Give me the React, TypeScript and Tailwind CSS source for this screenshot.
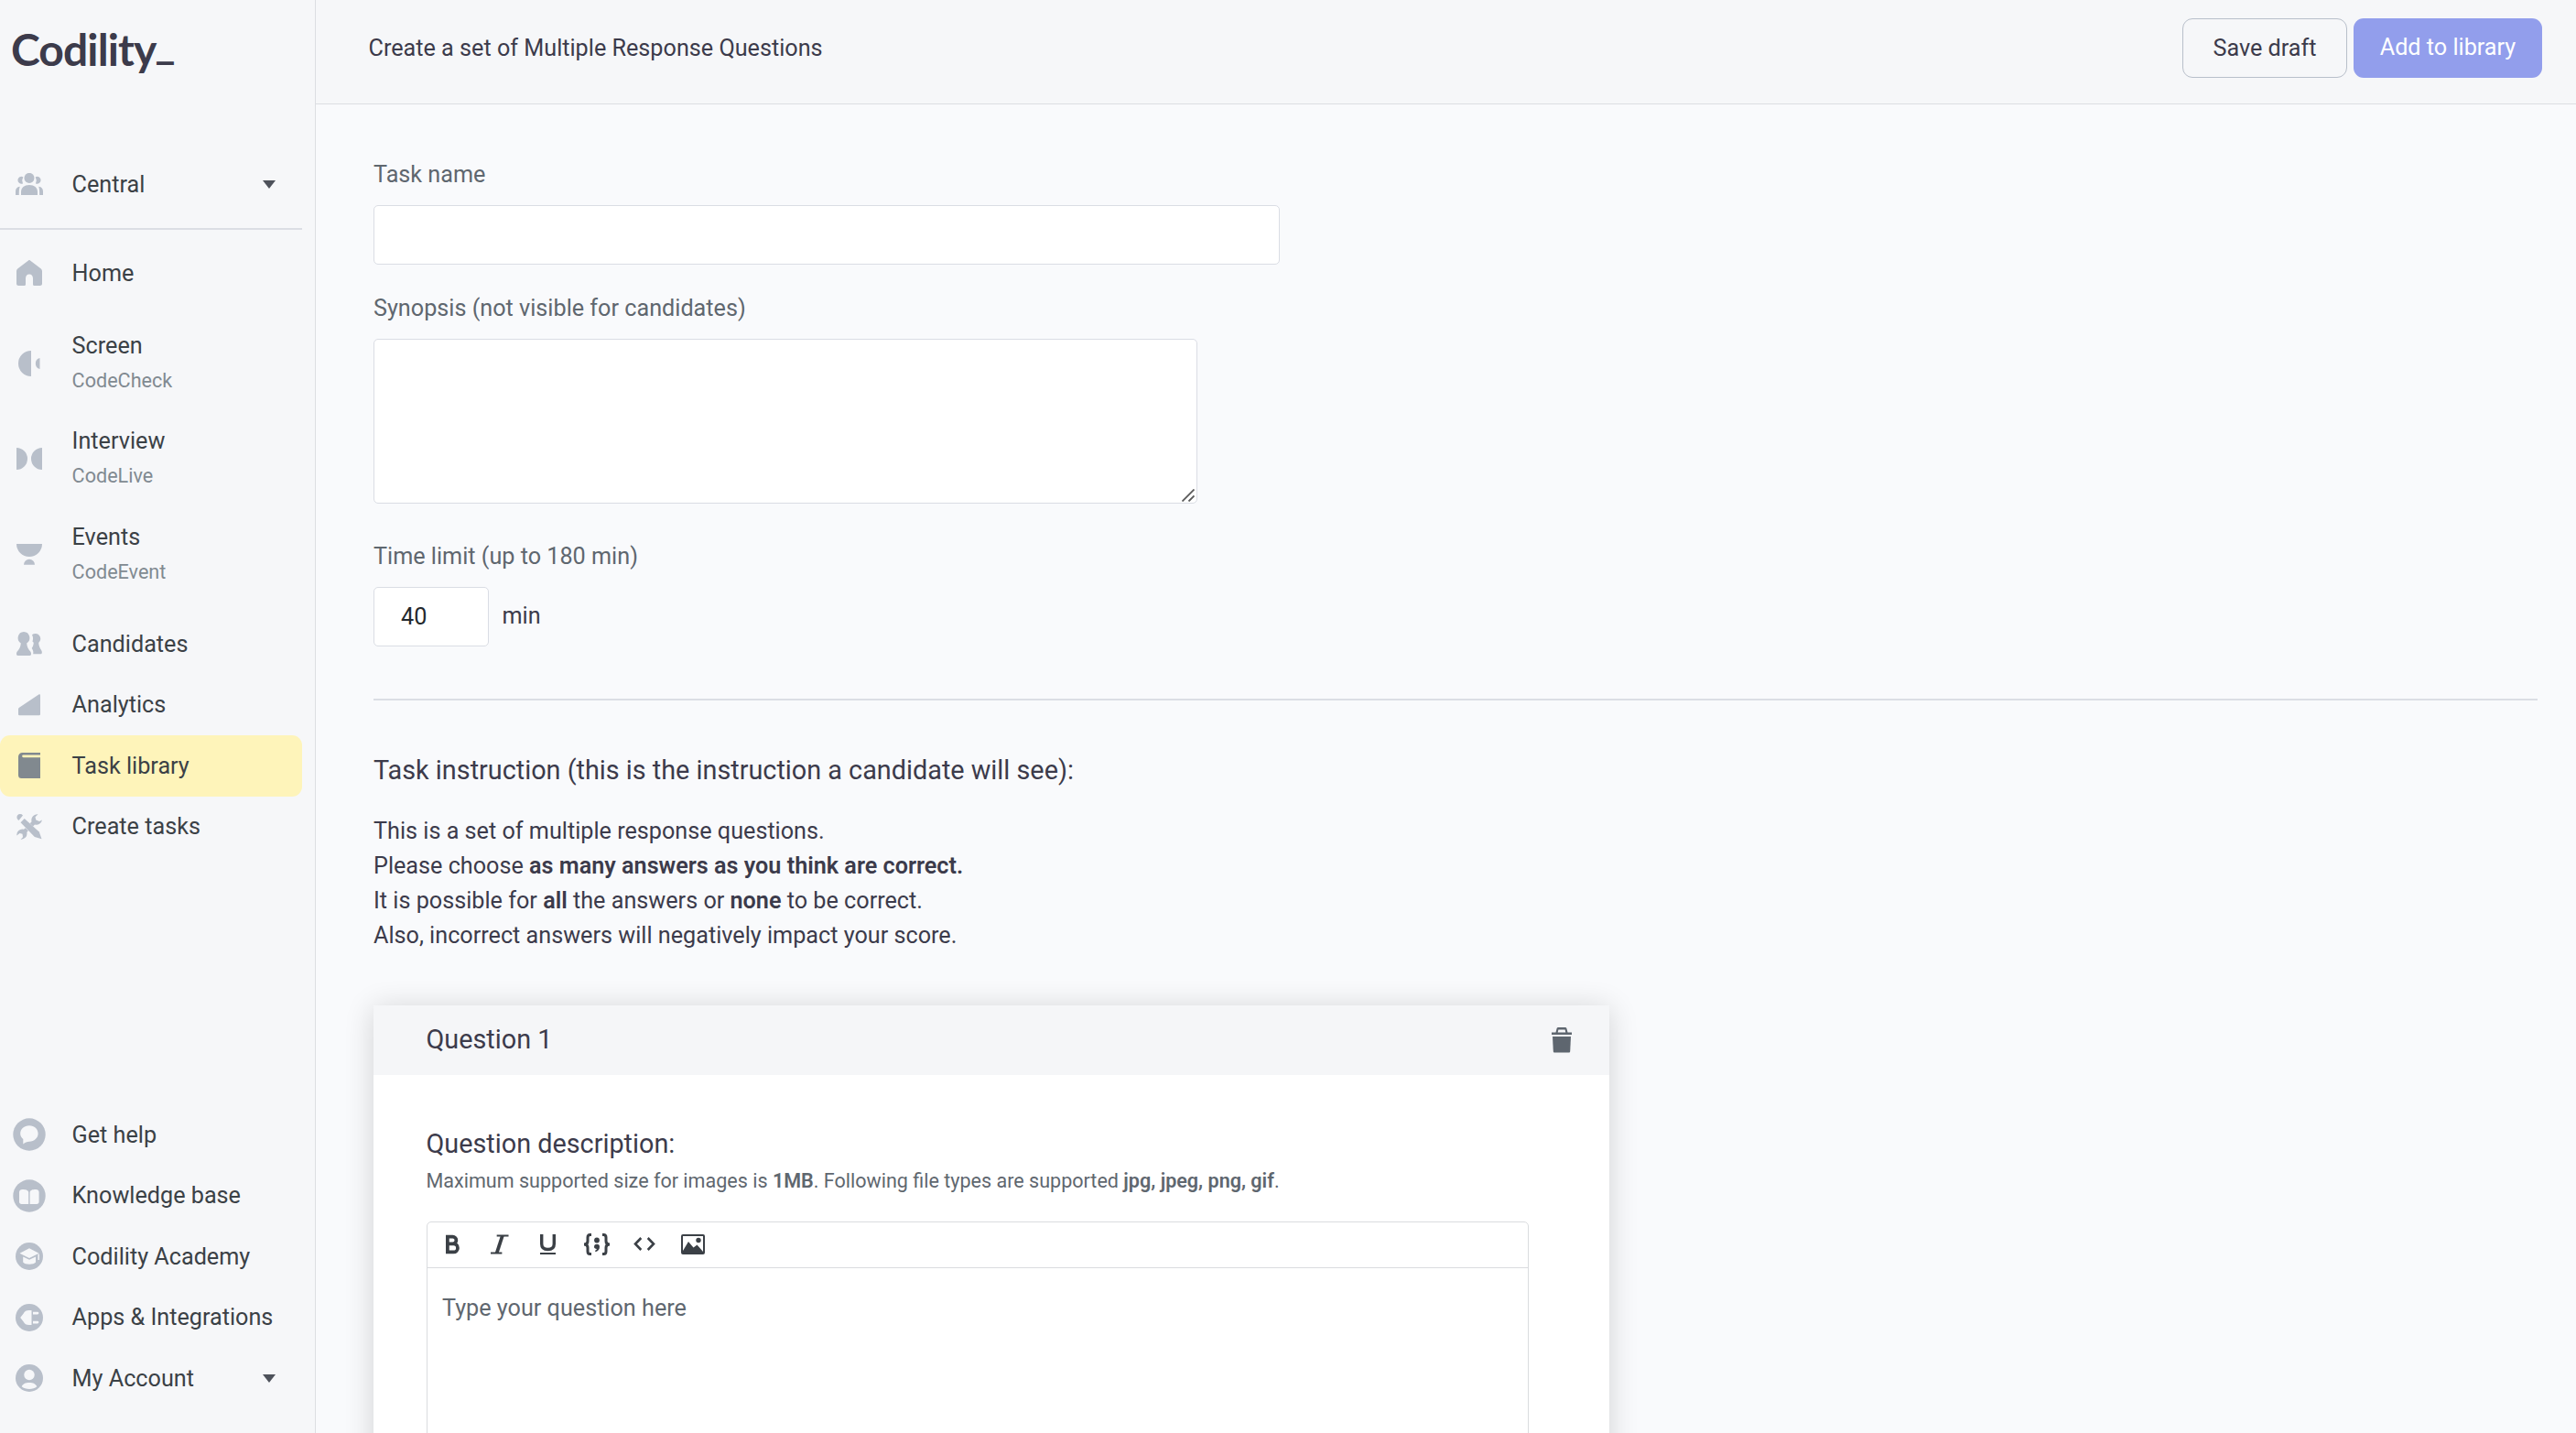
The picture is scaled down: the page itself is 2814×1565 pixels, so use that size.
import React from "react";
import clsx from "clsx";

const icons = {
  group: (
    <svg width="30" height="24" viewBox="0 0 30 24" fill="currentColor">
      <circle cx="15" cy="5.4" r="5.5" />
      <path d="M6 24v-3.500c0-4.500 3.500-7.500 9-7.500s9 3 9 7.500v3.500z" />
      <path d="M8.300 4.200a4 4 0 1 0-.3 7.200A8 8 0 0 1 8.300 4.200z" />
      <path d="M21.700 4.200a4 4 0 1 1 .3 7.200A8 8 0 0 0 21.700 4.200z" />
      <path d="M0 24v-4c0-2.800 1.500-4.800 4.800-5.200C4 17 3.800 19 3.800 24z" />
      <path d="M30 24v-4c0-2.800-1.500-4.800-4.800-5.200.8 2.200 1 4.200 1 9.200z" />
    </svg>
  ),
  home: (
    <svg width="28" height="28" viewBox="0 0 28 28" fill="currentColor">
      <path d="M13 .4a1.500 1.500 0 0 1 2 0L26.800 9.500c.8.700 1.200 1.500 1.200 2.500v13.500a2.300 2.300 0 0 1-2.300 2.500H19.500a1.500 1.500 0 0 1-1.500-1.500V20c0-2.600-1.500-4.500-4-4.500S10 17.400 10 20v6.500A1.500 1.500 0 0 1 8.500 28H2.300A2.300 2.300 0 0 1 0 25.500V12c0-1 .4-1.800 1.200-2.500z" />
    </svg>
  ),
  screen: (
    <svg width="24" height="28" viewBox="0 0 24 28" fill="currentColor">
      <path d="M14 0v28A14 14 0 0 1 14 0zM23.500 8v12a6.200 6.200 0 0 1 0-12z" />
    </svg>
  ),
  interview: (
    <svg width="28" height="24" viewBox="0 0 28 24" fill="currentColor">
      <path d="M0 0v24a12 12 0 0 0 0-24zM28 0v24a12 12 0 0 1 0-24z" />
    </svg>
  ),
  events: (
    <svg width="28" height="23" viewBox="0 0 28 23" fill="currentColor">
      <path d="M0 0h28a14 14 0 0 1-28 0zM8 22.700a6 6 0 0 1 12 0z" />
    </svg>
  ),
  candidates: (
    <svg width="28" height="26" viewBox="0 0 28 26" fill="currentColor">
      <path d="M8 0a6.700 6.700 0 0 0-3.200 12.400C4.600 16.500 2.800 19 .8 21.500 0 22.500 0 23.500 0 24.300 0 25.300.6 26 1.500 26h13c1 0 1.500-.7 1.500-1.700 0-.8 0-1.800-.8-2.800-2-2.500-3.800-5-4-9.100A6.700 6.700 0 0 0 8 0z" />
      <path d="M17 3.300A5.200 5.200 0 1 1 24.200 12c.2 3.500 1.500 6 3 8.200 1 1.500.9 4.100-.7 4.100h-8.300c.5-2.800-.2-4.500-1.500-6.300 1.300-2 2-4 2.100-6.200a6 6 0 0 1-1.300-1.300c.8-2.400.8-4.800-.5-7.200z" />
    </svg>
  ),
  analytics: (
    <svg width="24" height="24" viewBox="0 0 24 24" fill="currentColor">
      <path d="M22.300.5c.9-.6 1.700-.1 1.700.9v20.600a1.300 1.300 0 0 1-1.300 1.300H1.300A1.300 1.300 0 0 1 0 22v-5.500c0-.8.3-1.300 1-1.800z" />
    </svg>
  ),
  library: (
    <svg width="24" height="28" viewBox="0 0 24 28" fill="currentColor">
      <path d="M4.500 0H24v2.500H5.500a1.300 1.300 0 0 0 0 2.700H24V28H3.500A3.500 3.500 0 0 1 0 24.500v-20A4.500 4.500 0 0 1 4.500 0z" />
    </svg>
  ),
  tools: (
    <svg width="28" height="28" viewBox="0 0 28 28" fill="currentColor">
      <path d="M1 1.500A3.800 3.800 0 0 1 7 1.500L2.500 7A4 4 0 0 1 1 1.500z" />
      <path d="M8.700 5 24.800 19.500 27.500 27.300 19.800 25 4.500 9.200z" />
      <path d="M23.500.3A6.300 6.300 0 0 0 16.600 8.300L14.800 10.200 18 13.400 20 11.500A6.300 6.300 0 0 0 28 6.500L25 8 21.300 6.500 20.500 3.300z" />
      <path d="M9.800 15.300 12.800 18.300 11.300 20A6.300 6.300 0 0 1 4.500 27.700L7 25.200 6.500 21.700 3.500 21 .3 23.500A6.300 6.300 0 0 1 8 16.700z" />
    </svg>
  ),
  help: (
    <svg width="36" height="36" viewBox="0 0 36 36" fill="none">
      <circle cx="18" cy="18" r="17.7" fill="currentColor" />
      <path
        d="M18 8.300c5.600 0 9.600 3.900 9.600 8.700 0 4.900-4.200 8.500-9.600 8.700-2.600.1-4.500 1-6.700 2.700V23C9.300 21.500 8.200 19.300 8.200 17c0-4.800 4.200-8.700 9.800-8.700z"
        fill="#f6f7f9"
      />
    </svg>
  ),
  book: (
    <svg width="36" height="36" viewBox="0 0 36 36" fill="none">
      <circle cx="18" cy="18" r="17.700" fill="currentColor" />
      <path
        d="M7 14c0-2 1.500-3 3.500-3 3.500 0 6.700.7 6.700 3.500V27H9.500C8 27 7 26 7 24.500zM28.600 14c0-2-1.500-3-3.500-3-3.500 0-6.500.7-6.500 3.500V27h7.500c1.500 0 2.500-1 2.500-2.500z"
        fill="#f6f7f9"
      />
    </svg>
  ),
  academy: (
    <svg width="30" height="30" viewBox="0 0 30 30" fill="none">
      <circle cx="15" cy="15" r="15" fill="currentColor" />
      <path
        d="M4.500 11.800 15 6.200 25.500 11.800 15 17zM8.200 15.500 15 18.800 22 15.500V21.500C19.500 24.500 10.500 24.500 8.200 21.500z"
        fill="#f6f7f9"
      />
      <path d="M25.200 12.500V19" stroke="#f6f7f9" strokeWidth="1.400" />
    </svg>
  ),
  apps: (
    <svg width="30" height="30" viewBox="0 0 30 30" fill="none">
      <circle cx="15" cy="15" r="15" fill="currentColor" />
      <path
        d="M17.500 7v16h-3c-2.800 0-4.500-1-6-3.800L5.200 15 8.500 10.800C10 8 11.700 7 14.500 7zM19 8.700h5a1 1 0 0 1 0 2.700h-5zM19 18.700h5a1 1 0 0 1 0 2.700h-5z"
        fill="#f6f7f9"
      />
    </svg>
  ),
  account: (
    <svg width="30" height="30" viewBox="0 0 30 30" fill="none">
      <circle cx="15" cy="15" r="15" fill="currentColor" />
      <circle cx="15" cy="11.500" r="5.700" fill="#f6f7f9" />
      <path d="M6.700 24.300c1-2.800 4.300-4.300 8.300-4.300s7.300 1.500 8.300 4.300c-4 3.700-12.600 3.700-16.600 0z" fill="#f6f7f9" />
    </svg>
  ),
};

type NavItemProps = {
  icon: keyof typeof icons;
  label: string;
  sub?: string;
  active?: boolean;
  caret?: boolean;
};

const NavItem = ({ icon, label, sub, active, caret }: NavItemProps) => {
  return (
    <a
      className={clsx(
        "flex w-[330px] items-center rounded-[11px] pl-[14px] pr-[29px]",
        sub ? "h-[104.7px]" : "h-[66.5px]",
        active && "bg-[#fef4ba]"
      )}
    >
      <span
        className={clsx(
          "flex w-9 shrink-0 justify-center",
          active ? "text-[#81898f]" : "text-[#b8bfca]"
        )}
      >
        {icons[icon]}
      </span>
      <span className={clsx("ml-[28.6px] flex flex-1 flex-col", !sub && "pt-px")}>
        <span className="leading-[38px]">{label}</span>
        {sub && (
          <span className="text-[21.6px] leading-[38px] text-[#818a91]">
            {sub}
          </span>
        )}
      </span>
      {caret && (
        <svg width="14" height="9" viewBox="0 0 14 9" fill="#4e525b">
          <path d="M0 0h14L7 9z" />
        </svg>
      )}
    </a>
  );
};

const Sidebar = () => {
  return (
    <aside className="flex h-full w-[345px] shrink-0 flex-col border-r border-[#dcdee2] bg-[#f6f7f9] text-[#3b4146]">
      <div className="h-[168px] pl-3 pt-[26px] font-['Lato',sans-serif] text-[48px] font-bold leading-[56px] tracking-[-0.9px] text-[#3c3b4b]">
        Codility<span className="relative -left-px -top-[8px]">_</span>
      </div>
      <NavItem icon="group" label="Central" caret />
      <div className="mb-[14.500px] mt-[14px] h-0.5 w-[330px] bg-[#dbdee4]" />
      <NavItem icon="home" label="Home" />
      <div className="mt-[12.700px]">
        <NavItem icon="screen" label="Screen" sub="CodeCheck" />
        <NavItem icon="interview" label="Interview" sub="CodeLive" />
        <NavItem icon="events" label="Events" sub="CodeEvent" />
      </div>
      <div className="mt-[11.900px]">
        <NavItem icon="candidates" label="Candidates" />
        <NavItem icon="analytics" label="Analytics" />
        <NavItem icon="library" label="Task library" active />
        <NavItem icon="tools" label="Create tasks" />
      </div>
      <div className="mb-[26.400px] mt-auto">
        <NavItem icon="help" label="Get help" />
        <NavItem icon="book" label="Knowledge base" />
        <NavItem icon="academy" label="Codility Academy" />
        <NavItem icon="apps" label="Apps & Integrations" />
        <NavItem icon="account" label="My Account" caret />
      </div>
    </aside>
  );
};

const Header = () => {
  return (
    <header className="flex h-[114px] shrink-0 justify-between border-b border-[#dcdee2] bg-[#f6f7f9] pl-[57.500px] pr-[37px] pt-5">
      <h1 className="leading-[65px]">
        Create a set of Multiple Response Questions
      </h1>
      <div className="flex gap-[7px]">
        <button className="h-[65px] w-[180px] rounded-[11px] border border-[#b8bfca]">
          Save draft
        </button>
        <button className="h-[65px] w-[206px] rounded-[11px] bg-[#929eec] pb-0.5 text-white">
          Add to library
        </button>
      </div>
    </header>
  );
};

const EditorToolbar = () => {
  return (
    <div className="flex h-[50px] items-center border-b border-[#dadcdf] pb-0.5 pl-5 text-[#3b4046]">
      <svg width="15" height="22" viewBox="0 0 16 22" fill="none" stroke="currentColor" strokeWidth="4">
        <path d="M2 2H8a4 4 0 0 1 0 8.300H2M2 10.300H9a4.700 4.700 0 0 1 0 9.700H2zM2 0V22" />
      </svg>
      <svg className="ml-[34px]" width="20" height="22" viewBox="0 0 21 22" fill="none" stroke="currentColor">
        <path d="M7 1H20.500M0 21H13" strokeWidth="2" />
        <path d="M13.500 1 7 21" strokeWidth="4" />
      </svg>
      <svg className="ml-[34px]" width="17" height="22" viewBox="0 0 17 22" fill="none" stroke="currentColor">
        <path d="M1.700 0V10.500C1.700 14.500 4.200 16.500 8.500 16.500S15.300 14.500 15.300 10.500V0" strokeWidth="3.400" />
        <path d="M0 21H17" strokeWidth="2" />
      </svg>
      <svg className="ml-[30px]" width="30" height="24" viewBox="0 0 30 24" fill="none" stroke="currentColor" strokeWidth="3">
        <path d="M9 1.500H7.500C5.500 1.500 5 2.700 5 4.500V8.500C5 10.700 3.500 12 1 12 3.500 12 5 13.300 5 15.500V19.500C5 21.300 5.500 22.500 7.500 22.500H9M21 1.500H22.500C24.500 1.500 25 2.700 25 4.500V8.500C25 10.700 26.500 12 29 12 26.500 12 25 13.300 25 15.500V19.500C25 21.300 24.500 22.500 22.500 22.500H21" />
        <circle cx="15" cy="7.500" r="2.900" fill="currentColor" stroke="none" />
        <path d="M12 14.800a3 3 0 0 1 6 0c0 3-1.700 4.700-4.700 5.400v-1.800c1-.4 1.500-.8 1.600-1.500-1.700 0-2.900-.8-2.900-2.100z" fill="currentColor" stroke="none" />
      </svg>
      <svg className="ml-[25px]" width="24" height="15" viewBox="0 0 24 15" fill="none" stroke="currentColor" strokeWidth="2.600">
        <path d="M8.300 1 2 7.500 8.300 14M15.700 1 22 7.500 15.700 14" />
      </svg>
      <svg className="ml-[27.500px]" width="26" height="22" viewBox="0 0 26 22" fill="none" stroke="currentColor" strokeWidth="2">
        <rect x="1" y="1" width="24" height="20" rx="1" />
        <path d="M2 20V18L8 8 13.500 14.500 17.500 11.500 24 19V20z" fill="currentColor" stroke="none" />
        <circle cx="19" cy="6.500" r="2.700" fill="currentColor" stroke="none" />
      </svg>
    </div>
  );
};

const QuestionCard = () => {
  return (
    <section className="mt-[57px] flex h-[700px] w-[1350px] shrink-0 flex-col bg-white shadow-[0_3px_30px_rgba(0,0,0,0.16)]">
      <div className="flex h-[76px] shrink-0 items-center justify-between bg-[#f5f6f8] pl-[57.500px] pr-[41px]">
        <h3 className="pb-0.5 text-[28.8px] leading-[74px]">Question 1</h3>
        <svg width="22" height="28" viewBox="0 0 22 28" fill="#5e666f">
          <path d="M0 5.500h4.500L5.500 1.500C5.800.5 6.300 0 7.300 0h7.400c1 0 1.500.5 1.800 1.500l1 4H22V8H0zM6.700 5.500h8.600l-.7-3H7.400z" fillRule="evenodd" />
          <path d="M1 10h20l-.8 16.200c-.1.900-.6 1.300-1.400 1.300H3.200c-.8 0-1.300-.4-1.400-1.300z" />
        </svg>
      </div>
      <div className="flex flex-1 flex-col pl-[57.500px] pr-[88px] pt-[55px]">
        <h4 className="text-[28.8px] leading-10">Question description:</h4>
        <p className="pt-px text-[21.56px] leading-10 text-[#5f676f]">
          Maximum supported size for images is <b className="font-semibold">1MB</b>. Following
          file types are supported <b className="font-semibold">jpg, jpeg, png, gif</b>.
        </p>
        <div className="ml-[0.5px] mt-[24px] flex-1 rounded-t-[5px] border border-[#dadcdf]">
          <EditorToolbar />
          <div className="px-4 pt-[25px] leading-[38px] text-[#5f676f]">
            Type your question here
          </div>
        </div>
      </div>
    </section>
  );
};

const TaskForm = () => {
  return (
    <main className="flex flex-1 flex-col overflow-hidden bg-[#f9fafc] pl-[63px] pr-[42px] pt-[58px]">
      <label className="leading-[38px] text-[#5f676f]">Task name</label>
      <input className="mt-[14px] h-[65px] w-[990px] shrink-0 rounded-[5px] border border-[#dadde4] bg-white" />
      <label className="mt-[29px] leading-[38px] text-[#5f676f]">
        Synopsis (not visible for candidates)
      </label>
      <div className="relative mt-[14px] h-[180px] w-[900px] shrink-0">
        <textarea className="block h-full w-full resize-none rounded-[5px] border border-[#dadde4] bg-white" />
        <svg className="absolute bottom-0.5 right-[3px]" width="14" height="14" viewBox="0 0 14 14" stroke="#5a5a5a" strokeWidth="1.800">
          <path d="M0.500 13.500 13.500 .5M7.500 13.500 13.500 7.500" />
        </svg>
      </div>
      <label className="mt-[39px] leading-[38px] text-[#5f676f]">
        Time limit (up to 180 min)
      </label>
      <div className="mt-[14px] flex items-center">
        <input
          className="h-[65px] w-[126px] rounded-[5px] border border-[#dadde4] bg-white pl-[29px] text-[#23282d]"
          defaultValue="40"
        />
        <span className="ml-[14.500px] pb-0.5">min</span>
      </div>
      <div className="mt-[57px] h-0.5 shrink-0 bg-[#dbdee4]" />
      <h2 className="mt-[56px] text-[28.8px] leading-10">
        Task instruction (this is the instruction a candidate will see):
      </h2>
      <p className="mt-[28px] leading-[38px]">
        This is a set of multiple response questions.
        <br />
        Please choose <b className="font-semibold">as many answers as you think are correct.</b>
        <br />
        It is possible for <b className="font-semibold">all</b> the answers or{" "}
        <b className="font-semibold">none</b> to be correct.
        <br />
        Also, incorrect answers will negatively impact your score.
      </p>
      <QuestionCard />
    </main>
  );
};

const App = () => {
  return (
    <div className="flex h-[1565px] w-[2814px] overflow-hidden font-['Roboto',sans-serif] text-[25.2px] text-[#3c3b4b]">
      <Sidebar />
      <div className="flex flex-1 flex-col">
        <Header />
        <TaskForm />
      </div>
    </div>
  );
};

export default App;
